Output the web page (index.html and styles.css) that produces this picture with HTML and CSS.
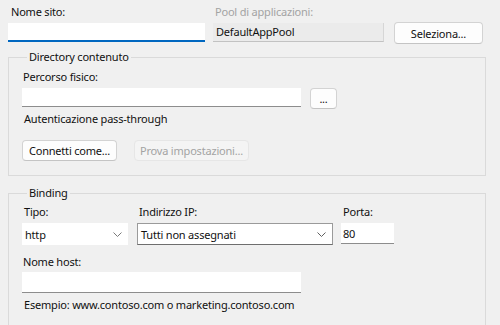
FILE: index.html
```html
<!DOCTYPE html>
<html lang="it">
<head>
    <meta charset="UTF-8">
    <meta name="viewport" content="width=device-width, initial-scale=1.0">
    <title>Aggiungi sito Web</title>
    <link rel="stylesheet" href="styles.css">
</head>
<body>
    <!-- Nome sito / pool -->
    <div class="top-row">
        <div class="field site-name">
            <label for="siteName">Nome sito:</label>
            <input type="text" id="siteName" class="text-input focused">
        </div>
        <div class="field pool">
            <label class="disabled">Pool di applicazioni:</label>
            <div class="readonly-box">DefaultAppPool</div>
        </div>
        <button class="btn select-btn">Seleziona...</button>
    </div>

    <!-- Directory contenuto -->
    <fieldset class="group">
        <legend>Directory contenuto</legend>
        <label class="field-label" for="physPath">Percorso fisico:</label>
        <div class="path-row">
            <input type="text" id="physPath" class="text-input wide">
            <button class="btn browse-btn">...</button>
        </div>
        <div class="auth-text">Autenticazione pass-through</div>
        <div class="button-row">
            <button class="btn connect-btn">Connetti come...</button>
            <button class="btn test-btn" disabled>Prova impostazioni...</button>
        </div>
    </fieldset>

    <!-- Binding -->
    <fieldset class="group binding">
        <legend>Binding</legend>
        <div class="binding-row">
            <div class="field type">
                <label>Tipo:</label>
                <div class="combo plain">
                    <span>http</span>
                    <svg class="chevron" width="9" height="5" viewBox="0 0 9 5"><path d="M0.5 0.5 L4.5 4.5 L8.5 0.5" fill="none" stroke="#7a7a7a" stroke-width="1"/></svg>
                </div>
            </div>
            <div class="field ip">
                <label>Indirizzo IP:</label>
                <div class="combo bordered">
                    <span>Tutti non assegnati</span>
                    <svg class="chevron" width="9" height="5" viewBox="0 0 9 5"><path d="M0.5 0.5 L4.5 4.5 L8.5 0.5" fill="none" stroke="#606060" stroke-width="1"/></svg>
                </div>
            </div>
            <div class="field port">
                <label for="port">Porta:</label>
                <input type="text" id="port" class="text-input port-input" value="80">
            </div>
        </div>
        <label class="field-label host-label" for="hostName">Nome host:</label>
        <input type="text" id="hostName" class="text-input wide host-input">
        <div class="example">Esempio: www.contoso.com o marketing.contoso.com</div>
    </fieldset>
</body>
</html>
```

FILE: styles.css
```css
html {
    overflow: hidden;
}

body {
    font-family: "Noto Sans", "Open Sans", sans-serif;
    font-size: 11px;
    letter-spacing: -0.2px;
    color: #111;
    background-color: #f0f0f0;
    margin: 0;
    padding: 4px 14px 0 8px;
}

label {
    display: block;
    height: 16px;
    line-height: 16px;
    margin-bottom: 3px;
}

label.disabled {
    color: #a3a3a3;
}

.text-input {
    display: block;
    box-sizing: border-box;
    height: 19px;
    border: none;
    border-bottom: 1px solid #8d8d8d;
    background: #fff;
    padding: 0 4px;
    font-family: inherit;
    font-size: 11px;
    letter-spacing: inherit;
    color: #111;
    outline: none;
    margin: 0;
}

.text-input.focused {
    border-bottom: 2px solid #0067c0;
}

/* Top row */
.top-row {
    display: flex;
}

.site-name {
    width: 197px;
}

.site-name label {
    padding-left: 3px;
}

.site-name .text-input {
    width: 100%;
}

.pool {
    width: 171px;
    margin-left: 8px;
}

.pool label {
    padding-left: 2px;
}

.readonly-box {
    box-sizing: border-box;
    height: 19px;
    line-height: 18px;
    padding: 0 3px;
    background: #ebebeb;
    border-bottom: 1px solid #c2c2c2;
    border-right: 1px solid #d6d6d6;
}

.btn {
    box-sizing: border-box;
    height: 21px;
    padding: 0;
    font-family: inherit;
    font-size: 11px;
    letter-spacing: inherit;
    color: #111;
    background: #fdfdfd;
    border: 1px solid #d3d3d3;
    border-bottom-color: #c4c4c4;
    border-radius: 4px;
}

.select-btn {
    width: 89px;
    height: 22px;
    margin: 18px 0 0 10px;
}

/* Group boxes */
.group {
    margin: 5px 0 0 0;
    padding: 4px 13px 14px 13px;
    border: 1px solid #dadada;
    min-width: 0;
}

.group legend {
    padding: 0 2px;
    margin-left: 5px;
    line-height: 16px;
}

.field-label {
    padding-left: 1px;
}

.path-row {
    display: flex;
}

.wide {
    width: 279px;
}

.browse-btn {
    width: 27px;
    margin-left: 9px;
    line-height: 14px;
}

.auth-text {
    line-height: 16px;
    margin-top: 2px;
    padding-left: 2px;
}

.button-row {
    display: flex;
    margin-top: 13px;
}

.connect-btn {
    width: 95px;
}

.test-btn {
    width: 115px;
    margin-left: 17px;
    color: #a3a3a3;
    background: #f4f4f4;
    border-color: #e6e6e6;
}

/* Binding */
.binding {
    margin-top: 9px;
    padding-top: 3px;
    padding-bottom: 30px;
}

.binding-row {
    display: flex;
}

.binding-row label {
    padding-left: 2px;
}

.type {
    width: 106px;
}

.ip {
    width: 196px;
    margin-left: 9px;
}

.port {
    width: 53px;
    margin-left: 8px;
}

.combo {
    box-sizing: border-box;
    height: 22px;
    display: flex;
    align-items: center;
    justify-content: space-between;
    padding: 0 6px 0 3px;
}

.combo.plain {
    background: #fff;
}

.combo.bordered {
    background: #fff;
    border: 1px solid #9a9a9a;
    border-bottom-color: #6e6e6e;
    padding-left: 3px;
}

.port-input {
    width: 100%;
    height: 21px;
    margin-top: 1px;
    padding-left: 2px;
}

.host-label {
    margin-top: 9px;
    margin-bottom: 2px;
}

.host-input {
    height: 21px;
}

.example {
    line-height: 16px;
    margin-top: 4px;
    padding-left: 2px;
}
```
